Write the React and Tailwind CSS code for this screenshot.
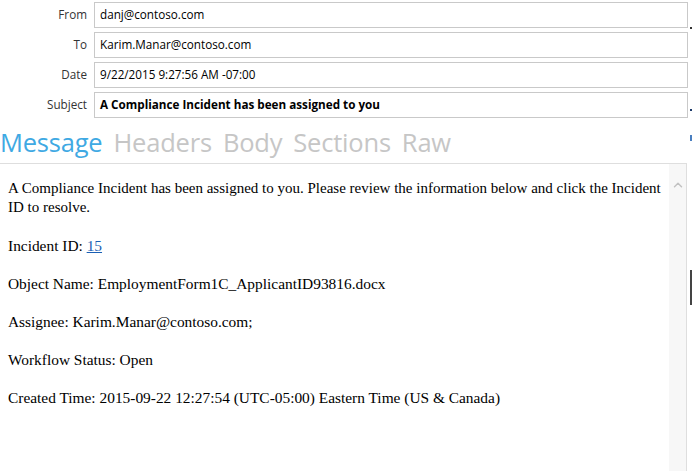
import { ChevronUp } from "lucide-react";

const fields = [
  { label: "From", value: "danj@contoso.com" },
  { label: "To", value: "Karim.Manar@contoso.com" },
  { label: "Date", value: "9/22/2015 9:27:56 AM -07:00" },
  { label: "Subject", value: "A Compliance Incident has been assigned to you", bold: true },
];

const tabs = ["Message", "Headers", "Body", "Sections", "Raw"];

export default function App() {
  return (
    <div className="relative w-[692px] h-[471px] overflow-hidden bg-white font-['Open_Sans',sans-serif]">
      <div className="flex flex-col gap-[4px] pt-[2px]">
        {fields.map((f) => (
          <div key={f.label} className="flex items-center">
            <div className="w-[88px] pr-[1px] text-right text-[11.7px] text-[#333]">{f.label}</div>
            <div
              className={`ml-[6px] w-[594px] h-[26px] border border-[#c9c9c9] px-[5px] flex items-center text-[11.7px] text-black ${
                f.bold ? "font-bold" : ""
              }`}
            >
              {f.value}
            </div>
          </div>
        ))}
      </div>

      <div className="flex gap-[11px] h-[45px] items-center pt-[4px] text-[25.5px] leading-none tracking-[-0.2px]">
        {tabs.map((t, i) => (
          <span key={t} className={i === 0 ? "text-[#3fa9e3]" : "text-[#c6c6c6]"}>
            {t}
          </span>
        ))}
      </div>

      <div className="flex w-[687px] h-[310px] border-t border-r border-[#dedede]">
        <div className="flex-1 pl-[8px] pt-[15px] font-['Liberation_Serif',serif] text-[15.4px] leading-[19px] text-black">
          <p className="mb-[19px] text-[15px]">
            A Compliance Incident has been assigned to you. Please review the information below and click the Incident ID
            to resolve.
          </p>
          <p className="mb-[19px]">
            Incident ID: <span className="text-[#1a5fb4] underline">15</span>
          </p>
          <p className="mb-[19px]">Object Name: EmploymentForm1C_ApplicantID93816.docx</p>
          <p className="mb-[19px]">Assignee: Karim.Manar@contoso.com;</p>
          <p className="mb-[19px]">Workflow Status: Open</p>
          <p>Created Time: 2015-09-22 12:27:54 (UTC-05:00) Eastern Time (US &amp; Canada)</p>
        </div>
        <div className="w-[17px] bg-[#f7f7f7] flex justify-center pt-[14px]">
          <ChevronUp size={14} strokeWidth={2.5} className="text-[#c2c2c2]" />
        </div>
      </div>

      <div className="absolute left-[690px] top-[27px] w-[2px] h-[2px] bg-[#333]" />
      <div className="absolute left-[690px] top-[109px] w-[2px] h-[2px] bg-[#1d3a6a]" />
      <div className="absolute left-[690px] top-[135px] w-[2px] h-[6px] bg-[#4a7fc0]" />
      <div className="absolute left-[690px] top-[270px] w-[2px] h-[35px] bg-[#444]" />
    </div>
  );
}
